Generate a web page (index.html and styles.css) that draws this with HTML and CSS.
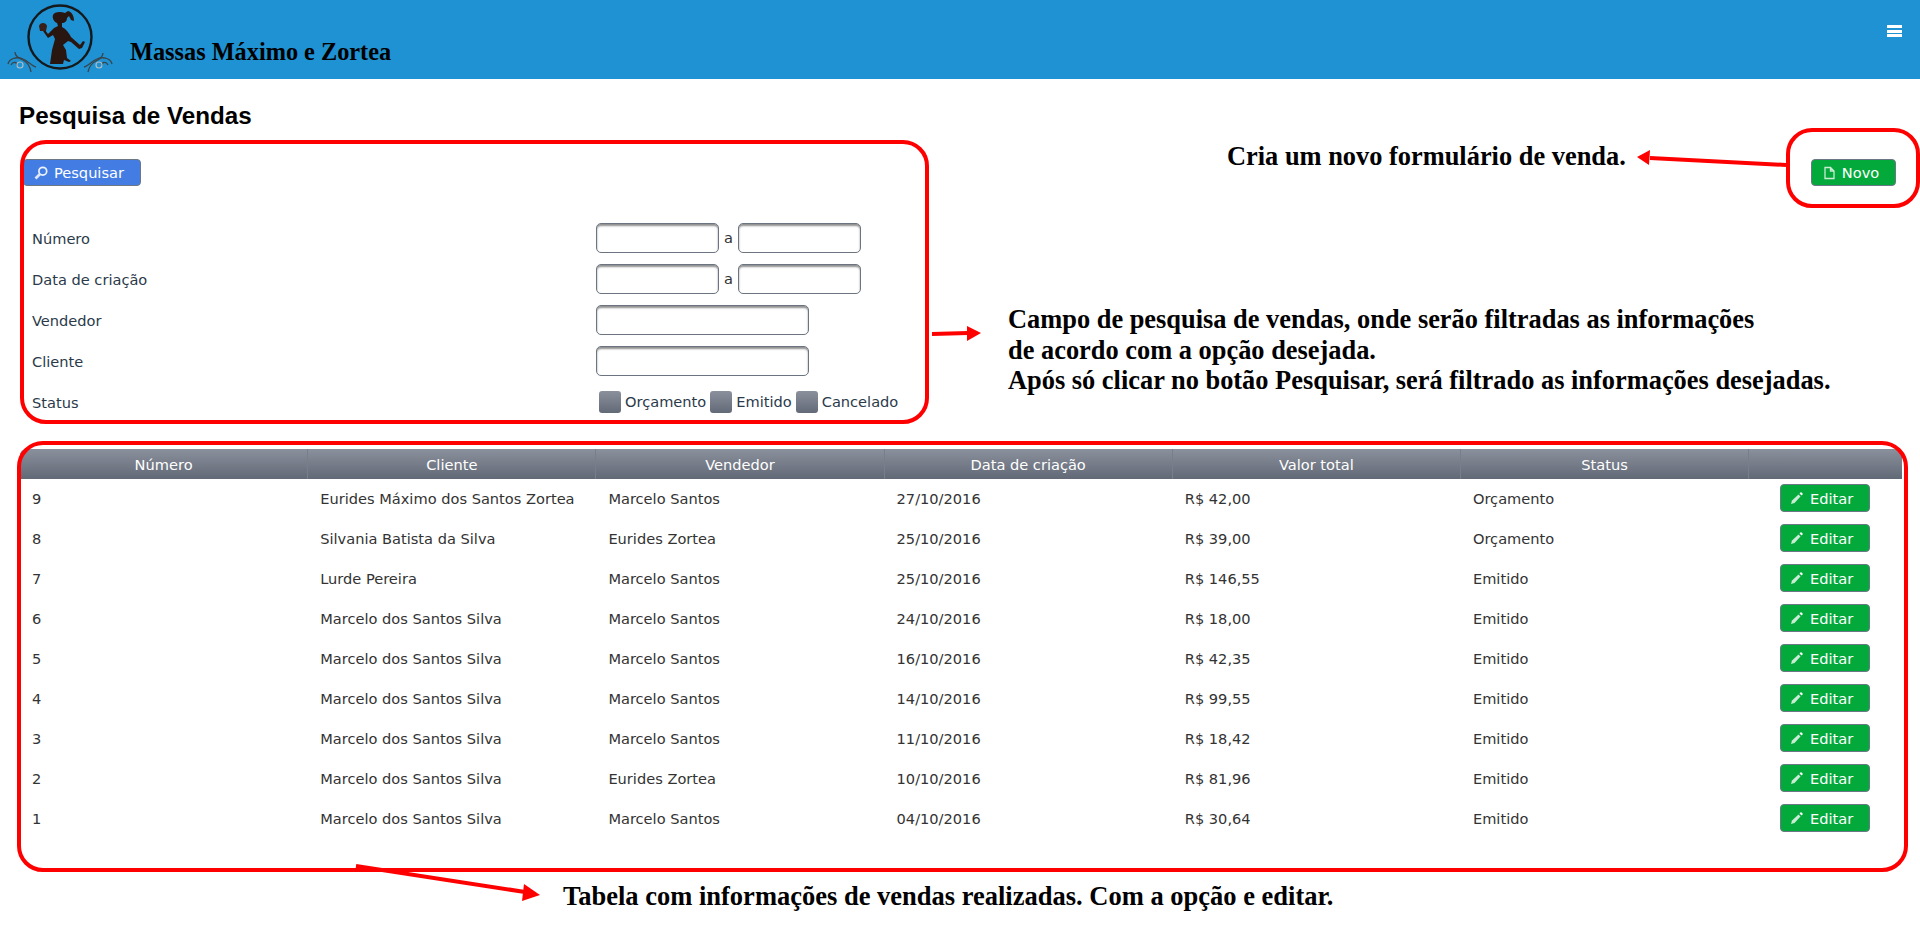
FILE: index.html
```html
<!DOCTYPE html>
<html lang="pt-BR">
<head>
    <meta charset="UTF-8">
    <title>Pesquisa de Vendas</title>
    <link rel="stylesheet" href="styles.css">
</head>
<body>
    <header class="topbar">
        <svg class="logo" viewBox="0 0 120 79" width="120" height="79">
            <circle cx="60" cy="37" r="31.5" fill="none" stroke="#15191c" stroke-width="2.4"/>
            <path fill="#2a1610" d="M53 15 C54 12 60 11 65 13 L68 11 C72 12 74 16 74 21 L71 20 L69 16 L67 18 C67 21 65 23 62 23 L62 27 C66 29 69 33 71 37 L80 45 L83 41 L85 42 L82 48 L79 49 L71 42 L68 41 L63 45 L66 50 L67 58 L71 61 L69 62 L64 60 L63 64 L50 64 L52 50 L55 39 L53 35 L48 38 L43 31 L45 30 L48 34 L54 28 L58 26 L57 23 C54 22 52 18 53 15 Z"/>
            <path fill="#3a2018" d="M39 26 L47 26 L46 31 L40 31 Z"/>
            <path fill="#3a2018" d="M39 26 C40 22 46 22 47 26 Z"/>
            <g fill="none" stroke="#39454d" stroke-width="1.3">
                <path d="M8 64 C9 59 16 56 23 59 C28 61 32 66 36 67"/>
                <path d="M15 52 C15 56 18 58 23 60 C27 62 30 66 31 72"/>
                <path d="M11 65 C13 61 18 62 17 66"/>
                <path d="M112 64 C111 59 104 56 97 59 C92 61 88 66 84 67"/>
                <path d="M103 53 C103 57 100 59 96 61 C92 63 89 67 88 72"/>
                <path d="M108 65 C106 61 101 62 102 66"/>
            </g>
            <g fill="none" stroke="#a9bcc8" stroke-width="1.2">
                <circle cx="20" cy="65" r="3"/>
                <circle cx="99" cy="65" r="3"/>
            </g>
        </svg>
        <span class="brand">Massas Máximo e Zortea</span>
        <span class="menu-icon"><i></i><i></i><i></i></span>
    </header>

    <main class="content">
        <h1 class="page-title">Pesquisa de Vendas</h1>

        <div class="toolbar">
            <button class="btn btn-blue" type="button">
                <svg class="icon" viewBox="0 0 14 14"><circle cx="8.8" cy="5.2" r="3.9" fill="none" stroke="#eef3fd" stroke-width="1.7"/><path d="M6 8 L1.5 12.5" stroke="#dfe8fa" stroke-width="2.6"/></svg>
                Pesquisar
            </button>
            <button class="btn btn-green" type="button">
                <svg class="icon" viewBox="0 0 14 14"><path d="M3 1.5 H8.5 L12 5 V12.5 H3 Z M8.5 1.5 V5 H12" fill="none" stroke="#c9ecd3" stroke-width="1.3"/></svg>
                Novo
            </button>
        </div>

        <form class="filter">
            <label class="filter-label">Número</label>
            <div class="filter-field"><input class="input input-short" type="text"><span class="sep">a</span><input class="input input-short" type="text"></div>
            <label class="filter-label">Data de criação</label>
            <div class="filter-field"><input class="input input-short" type="text"><span class="sep">a</span><input class="input input-short" type="text"></div>
            <label class="filter-label">Vendedor</label>
            <div class="filter-field"><input class="input input-long" type="text"></div>
            <label class="filter-label">Cliente</label>
            <div class="filter-field"><input class="input input-long" type="text"></div>
            <label class="filter-label">Status</label>
            <div class="filter-field status-field">
                <span class="check"></span><span class="check-text">Orçamento</span>
                <span class="check"></span><span class="check-text">Emitido</span>
                <span class="check"></span><span class="check-text">Cancelado</span>
            </div>
        </form>

        <table class="sales">
            <thead>
                <tr>
                    <th>Número</th>
                    <th>Cliente</th>
                    <th>Vendedor</th>
                    <th>Data de criação</th>
                    <th>Valor total</th>
                    <th>Status</th>
                    <th class="col-action"></th>
                </tr>
            </thead>
            <tbody>
                <tr><td>9</td><td>Eurides Máximo dos Santos Zortea</td><td>Marcelo Santos</td><td>27/10/2016</td><td>R$ 42,00</td><td>Orçamento</td><td class="col-action"><button class="btn btn-green btn-edit" type="button"><svg class="icon" viewBox="0 0 14 14"><path d="M1 13 L2 9.5 L8.5 3.5 L10.5 5.5 L4.5 12 Z" fill="#c9ecd3"/><path d="M11 1 L13 3 L11.5 4.5 L9.5 2.5 Z" fill="#fff"/></svg>Editar</button></td></tr>
                <tr><td>8</td><td>Silvania Batista da Silva</td><td>Eurides Zortea</td><td>25/10/2016</td><td>R$ 39,00</td><td>Orçamento</td><td class="col-action"><button class="btn btn-green btn-edit" type="button"><svg class="icon" viewBox="0 0 14 14"><path d="M1 13 L2 9.5 L8.5 3.5 L10.5 5.5 L4.5 12 Z" fill="#c9ecd3"/><path d="M11 1 L13 3 L11.5 4.5 L9.5 2.5 Z" fill="#fff"/></svg>Editar</button></td></tr>
                <tr><td>7</td><td>Lurde Pereira</td><td>Marcelo Santos</td><td>25/10/2016</td><td>R$ 146,55</td><td>Emitido</td><td class="col-action"><button class="btn btn-green btn-edit" type="button"><svg class="icon" viewBox="0 0 14 14"><path d="M1 13 L2 9.5 L8.5 3.5 L10.5 5.5 L4.5 12 Z" fill="#c9ecd3"/><path d="M11 1 L13 3 L11.5 4.5 L9.5 2.5 Z" fill="#fff"/></svg>Editar</button></td></tr>
                <tr><td>6</td><td>Marcelo dos Santos Silva</td><td>Marcelo Santos</td><td>24/10/2016</td><td>R$ 18,00</td><td>Emitido</td><td class="col-action"><button class="btn btn-green btn-edit" type="button"><svg class="icon" viewBox="0 0 14 14"><path d="M1 13 L2 9.5 L8.5 3.5 L10.5 5.5 L4.5 12 Z" fill="#c9ecd3"/><path d="M11 1 L13 3 L11.5 4.5 L9.5 2.5 Z" fill="#fff"/></svg>Editar</button></td></tr>
                <tr><td>5</td><td>Marcelo dos Santos Silva</td><td>Marcelo Santos</td><td>16/10/2016</td><td>R$ 42,35</td><td>Emitido</td><td class="col-action"><button class="btn btn-green btn-edit" type="button"><svg class="icon" viewBox="0 0 14 14"><path d="M1 13 L2 9.5 L8.5 3.5 L10.5 5.5 L4.5 12 Z" fill="#c9ecd3"/><path d="M11 1 L13 3 L11.5 4.5 L9.5 2.5 Z" fill="#fff"/></svg>Editar</button></td></tr>
                <tr><td>4</td><td>Marcelo dos Santos Silva</td><td>Marcelo Santos</td><td>14/10/2016</td><td>R$ 99,55</td><td>Emitido</td><td class="col-action"><button class="btn btn-green btn-edit" type="button"><svg class="icon" viewBox="0 0 14 14"><path d="M1 13 L2 9.5 L8.5 3.5 L10.5 5.5 L4.5 12 Z" fill="#c9ecd3"/><path d="M11 1 L13 3 L11.5 4.5 L9.5 2.5 Z" fill="#fff"/></svg>Editar</button></td></tr>
                <tr><td>3</td><td>Marcelo dos Santos Silva</td><td>Marcelo Santos</td><td>11/10/2016</td><td>R$ 18,42</td><td>Emitido</td><td class="col-action"><button class="btn btn-green btn-edit" type="button"><svg class="icon" viewBox="0 0 14 14"><path d="M1 13 L2 9.5 L8.5 3.5 L10.5 5.5 L4.5 12 Z" fill="#c9ecd3"/><path d="M11 1 L13 3 L11.5 4.5 L9.5 2.5 Z" fill="#fff"/></svg>Editar</button></td></tr>
                <tr><td>2</td><td>Marcelo dos Santos Silva</td><td>Eurides Zortea</td><td>10/10/2016</td><td>R$ 81,96</td><td>Emitido</td><td class="col-action"><button class="btn btn-green btn-edit" type="button"><svg class="icon" viewBox="0 0 14 14"><path d="M1 13 L2 9.5 L8.5 3.5 L10.5 5.5 L4.5 12 Z" fill="#c9ecd3"/><path d="M11 1 L13 3 L11.5 4.5 L9.5 2.5 Z" fill="#fff"/></svg>Editar</button></td></tr>
                <tr><td>1</td><td>Marcelo dos Santos Silva</td><td>Marcelo Santos</td><td>04/10/2016</td><td>R$ 30,64</td><td>Emitido</td><td class="col-action"><button class="btn btn-green btn-edit" type="button"><svg class="icon" viewBox="0 0 14 14"><path d="M1 13 L2 9.5 L8.5 3.5 L10.5 5.5 L4.5 12 Z" fill="#c9ecd3"/><path d="M11 1 L13 3 L11.5 4.5 L9.5 2.5 Z" fill="#fff"/></svg>Editar</button></td></tr>
            </tbody>
        </table>
    </main>

    <!-- red notes drawn on top of the screen -->
    <svg class="marks" width="1920" height="947" viewBox="0 0 1920 947">
        <g fill="none" stroke="#ff0000" stroke-width="4">
            <rect x="22" y="142" width="905" height="280" rx="24"/>
            <rect x="1788" y="130" width="130" height="76" rx="24"/>
            <rect x="19" y="443" width="1887" height="427" rx="24"/>
            <path d="M1786 165 L1650 158"/>
            <path d="M932 334 L968 333"/>
            <path d="M356 866 L525 892"/>
        </g>
        <g fill="#ff0000">
            <path d="M1637 157 L1650 150 L1649 165 Z"/>
            <path d="M981 333 L967 326 L967 341 Z"/>
            <path d="M540 895 L524 884 L522 901 Z"/>
        </g>
    </svg>
    <p class="note note-novo">Cria um novo formulário de venda.</p>
    <p class="note note-campo">Campo de pesquisa de vendas, onde serão filtradas as informações<br>de acordo com a opção desejada.<br>Após só clicar no botão Pesquisar, será filtrado as informações desejadas.</p>
    <p class="note note-tabela">Tabela com informações de vendas realizadas. Com a opção e editar.</p>
</body>
</html>
```

FILE: styles.css
```css
body {
    font-family: "DejaVu Sans", Verdana, sans-serif;
    font-size: 14.6px;
    color: #333;
    margin: 0;
    padding: 0;
    background-color: #fff;
    position: relative;
    height: 947px;
    overflow: hidden;
}
.topbar {
    background-color: #1e92d2;
    height: 79px;
    display: flex;
    align-items: flex-start;
}
.logo {
    display: block;
    flex: none;
}
.brand {
    font-family: "Liberation Serif", "Times New Roman", serif;
    font-size: 24.3px;
    font-weight: bold;
    color: #000;
    margin: 38px 0 0 10px;
}
.menu-icon {
    margin: 25px 18px 0 auto;
    width: 15px;
    display: flex;
    flex-direction: column;
    gap: 1.5px;
}
.menu-icon i {
    display: block;
    height: 3px;
    background-color: #fff;
}
.content {
    padding: 0 18px 0 20px;
}
.page-title {
    font-family: "Liberation Sans", Arial, sans-serif;
    font-size: 24.2px;
    font-weight: bold;
    color: #000;
    margin: 0 0 0 -1px;
    padding-top: 24px;
    line-height: 26px;
}
.toolbar {
    display: flex;
    justify-content: space-between;
    margin: 30px 6px 0 3px;
}
.btn {
    display: inline-flex;
    align-items: center;
    justify-content: center;
    gap: 6px;
    height: 27px;
    padding: 0 6px 0 0;
    font-family: "DejaVu Sans", Verdana, sans-serif;
    font-size: 14.6px;
    color: #fff;
    border: 1px solid #6b7785;
    border-radius: 4px;
}
.btn-blue {
    width: 118px;
    background-color: #437de4;
}
.btn-green {
    width: 85px;
    background-color: #03aa3b;
}
.btn-edit {
    width: 90px;
    height: 28px;
}
.icon {
    width: 14px;
    height: 14px;
    flex: none;
}
.filter {
    display: grid;
    grid-template-columns: 564px auto;
    grid-auto-rows: 41px;
    align-items: center;
    margin-top: 31px;
    padding-left: 12px;
}
.filter-label {
    color: #2b3a4a;
    padding-top: 1px;
}
.filter-field {
    display: flex;
    align-items: center;
}
.input {
    box-sizing: border-box;
    height: 30px;
    border: 1px solid #6c7481;
    border-radius: 5px;
    box-shadow: inset 0 2px 2px #8f8f8f;
    background-color: #fff;
    padding: 0;
}
.input-short {
    width: 123px;
}
.input-long {
    width: 213px;
}
.sep {
    width: 19px;
    text-align: center;
}
.status-field {
    padding-left: 3px;
}
.check {
    width: 22px;
    height: 22px;
    flex: none;
    border-radius: 3px;
    background: linear-gradient(#8a909c, #636a77);
}
.check-text {
    margin: 0 4px 0 4px;
    color: #2b3a4a;
}
.sales {
    width: 1882px;
    table-layout: fixed;
    border-collapse: separate;
    border-spacing: 0;
    margin-top: 27px;
}
.sales th {
    width: 288.2px;
    height: 30px;
    padding: 0;
    font-weight: normal;
    color: #fff;
    background: linear-gradient(#8a909c, #626976);
    border-right: 1px solid #787e8a;
    box-sizing: border-box;
}
.sales th:first-child {
    border-top-left-radius: 6px;
}
.sales th.col-action {
    width: auto;
    border-right: none;
    border-top-right-radius: 6px;
}
.sales td {
    box-sizing: border-box;
    height: 40px;
    padding: 0 12px 2px;
    white-space: nowrap;
}
.sales td.col-action {
    text-align: center;
    padding: 0 2px 2px 0;
}
.note {
    position: absolute;
    margin: 0;
    font-family: "Liberation Serif", "Times New Roman", serif;
    font-size: 26.4px;
    font-weight: bold;
    color: #000;
    white-space: nowrap;
}
.marks {
    position: absolute;
    left: 0;
    top: 0;
}
.note-novo {
    left: 1227px;
    top: 141px;
}
.note-campo {
    left: 1008px;
    top: 304px;
    line-height: 30.5px;
}
.note-tabela {
    left: 563px;
    top: 881px;
    font-size: 26.5px;
}
```
